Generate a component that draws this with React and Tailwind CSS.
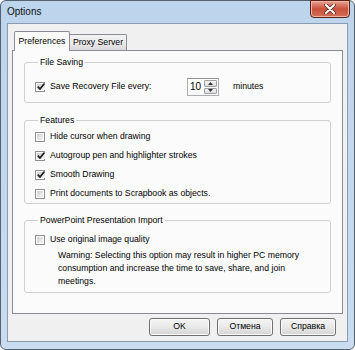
import React from 'react';

function Check({ checked }) {
    return (
        <span className="w-[10px] h-[10px] shrink-0 border border-[#8e8f8f] bg-white p-[1px] flex">
            <span className="flex-1 bg-gradient-to-br from-[#cfcfcf] to-[#f6f6f6] flex items-center justify-center">
                {checked && (
                    <svg width="8" height="8" viewBox="0 0 8 8">
                        <path d="M0.8 3.6 L3 6 L7.2 0.8" stroke="#1a1a1a" strokeWidth="1.7" fill="none" />
                    </svg>
                )}
            </span>
        </span>
    );
}

function Row({ checked, children }) {
    return (
        <div className="h-[19px] flex items-center gap-[5px]">
            <Check checked={checked} />
            <span>{children}</span>
        </div>
    );
}

function Group({ title, className, children }) {
    return (
        <fieldset className={"border border-[#d0d0d0] rounded-[3px] mx-[11px] pl-[10px] pr-[10px] " + className}>
            <legend className="ml-[3px] px-[2px] leading-[12px]">{title}</legend>
            {children}
        </fieldset>
    );
}

function Button({ children, w }) {
    return (
        <button
            type="button"
            className={"h-[18px] rounded-[3px] border border-[#707070] bg-gradient-to-b from-[#f4f4f4] via-[#e9e9e9] to-[#d4d4d4] shadow-[inset_0_0_0_1px_#fcfcfc] flex items-center justify-center " + w}
        >
            {children}
        </button>
    );
}

export default function App() {
    return (
        <div className="w-[355px] h-[350px] rounded-[6px] border border-[#56626f] bg-gradient-to-b from-[#bcd4ec] to-[#c9dcf0] flex flex-col px-[6px] pb-[7px] text-[8.7px] text-black font-['Liberation_Sans',Arial,sans-serif]">
            {/* Title bar */}
            <div className="h-[22px] flex items-start justify-between">
                <span className="text-[10px] leading-[22px] text-[#111]">Options</span>
                <div className="-mt-[1px] -mr-[2px] w-[40px] h-[18px] rounded-b-[4px] border border-[#5c2218] bg-gradient-to-b from-[#e6a494] via-[#c9503a] to-[#d2705a] shadow-[inset_0_0_0_1px_#eeb3a4] flex items-center justify-center">
                    <svg width="12" height="10" viewBox="0 0 12 10">
                        <path d="M2 1 L10 9 M10 1 L2 9" stroke="#5a2a22" strokeWidth="3.6" strokeLinecap="round" />
                        <path d="M2 1 L10 9 M10 1 L2 9" stroke="#ffffff" strokeWidth="2" strokeLinecap="round" />
                    </svg>
                </div>
            </div>

            {/* Client area */}
            <div className="flex-1 bg-[#f0f0f0] border border-[#8a9cb2] flex flex-col pt-[7px] pb-[5px]">
                {/* Tabs */}
                <div className="flex items-end pl-[6px] -mb-[1px] h-[20px]">
                    <div className="relative z-10 w-[56px] h-[20px] bg-[#fbfbfb] border border-b-0 border-[#898c95] rounded-t-[2px] flex items-center justify-center">
                        Preferences
                    </div>
                    <div className="w-[57px] h-[16px] mb-[1px] border border-l-0 border-b-0 border-[#898c95] rounded-tr-[2px] bg-gradient-to-b from-[#f3f3f3] via-[#ebebeb] to-[#d9d9d9] flex items-center justify-center">
                        Proxy Server
                    </div>
                </div>

                {/* Tab panel */}
                <div className="h-[264px] mx-[4px] bg-[#fbfbfb] border border-[#898c95] pt-[5px] flex flex-col">
                    <Group title="File Saving" className="pt-[10px] pb-[6px]">
                        <div className="h-[18px] flex items-center">
                            <Check checked />
                            <span className="ml-[5px] w-[137px]">Save Recovery File every:</span>
                            <div className="flex h-[18px] w-[32px] border border-[#abadb3] border-t-[#8e8f8f] bg-white">
                                <span className="flex-1 pl-[2px] text-[10px] leading-[16px]">10</span>
                                <div className="flex flex-col w-[13px] my-[1px] mr-[1px] gap-[1px]">
                                    <div className="flex-1 border border-[#a0a0a0] rounded-[1px] bg-gradient-to-b from-[#f6f6f6] to-[#dcdcdc] flex items-center justify-center">
                                        <svg width="5" height="3" viewBox="0 0 5 3"><path d="M0 3 L2.5 0 L5 3 Z" fill="#333" /></svg>
                                    </div>
                                    <div className="flex-1 border border-[#a0a0a0] rounded-[1px] bg-gradient-to-b from-[#f6f6f6] to-[#dcdcdc] flex items-center justify-center">
                                        <svg width="5" height="3" viewBox="0 0 5 3"><path d="M0 0 L2.5 3 L5 0 Z" fill="#333" /></svg>
                                    </div>
                                </div>
                            </div>
                            <span className="ml-[14px]">minutes</span>
                        </div>
                    </Group>

                    <Group title="Features" className="mt-[11px] pt-[1px] pb-[0px]">
                        <Row>Hide cursor when drawing</Row>
                        <Row checked>Autogroup pen and highlighter strokes</Row>
                        <Row checked>Smooth Drawing</Row>
                        <Row>Print documents to Scrapbook as objects.</Row>
                    </Group>

                    <Group title="PowerPoint Presentation Import" className="mt-[10px] pt-[4px] pb-[4px]">
                        <Row>Use original image quality</Row>
                        <p className="pl-[23px] leading-[13px]">
                            Warning: Selecting this option may result in higher PC memory<br />
                            consumption and increase the time to save, share, and join<br />
                            meetings.
                        </p>
                    </Group>
                </div>

                {/* Buttons */}
                <div className="mt-[4px] flex justify-end gap-[7px] pr-[11px]">
                    <Button w="w-[61px]">OK</Button>
                    <Button w="w-[56px]">Отмена</Button>
                    <Button w="w-[56px]">Справка</Button>
                </div>
            </div>
        </div>
    );
}
